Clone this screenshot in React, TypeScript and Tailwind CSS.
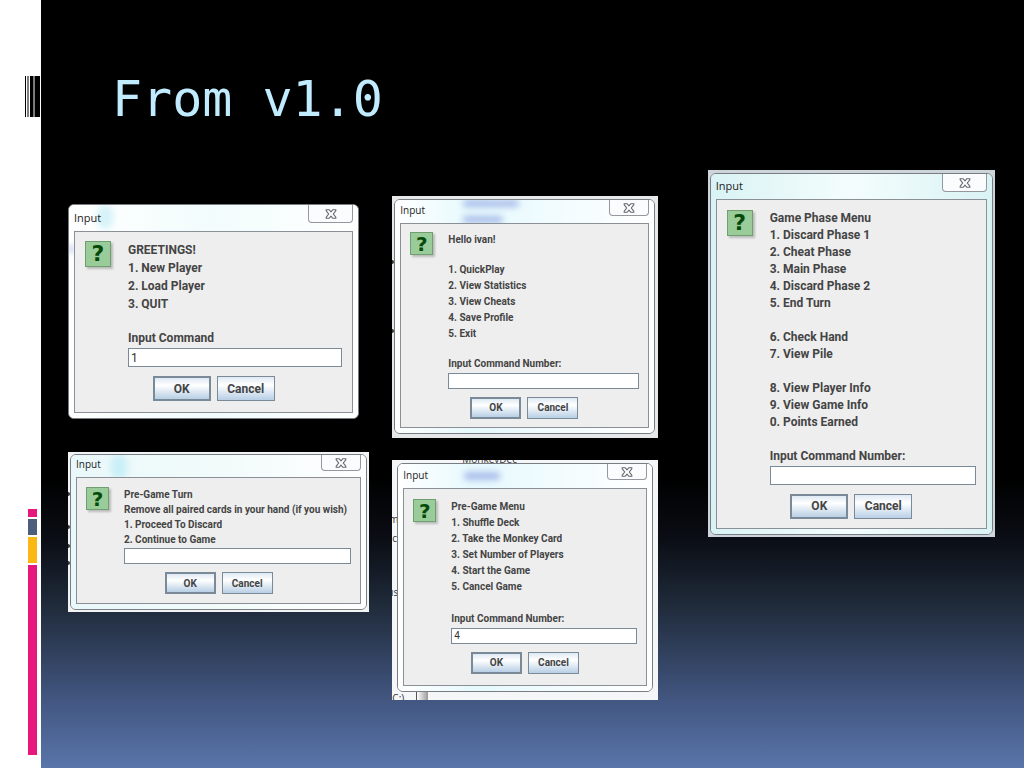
import { useId } from 'react';
import clsx from 'clsx';

type Size = 'lg' | 'sm';

interface DialogProps {
    lines: string[];
    value?: string;
    size?: Size;
    frame: string;
    title: string;
    body: string;
    leading: string;
    blank?: string;
    behind?: React.ReactNode;
    glass?: React.ReactNode;
}

function CloseIcon() {
    return (
        <svg viewBox="0 0 12 10" className="h-[10px] w-3" aria-hidden="true">
            <path
                d="M1.2.7h3L6 2.9 7.8.7h3v1.2L8.3 5l2.5 3.1v1.2h-3L6 7.1 4.2 9.3h-3V8.1L3.7 5 1.2 1.9z"
                fill="#fff"
                stroke="#62676d"
                strokeWidth="1.1"
            />
        </svg>
    );
}

function QuestionIcon({ size }: { size: Size }) {
    return (
        <div
            className={clsx(
                'flex shrink-0 items-center justify-center border border-[#6f9e70] bg-[#99cc99] font-["DejaVu_Sans",sans-serif] leading-none font-bold text-[#064a0a] shadow-[2px_2px_2px_#bbb]',
                size === 'lg' ? 'h-[26px] w-[26px] text-[22px]' : 'h-[23px] w-[23px] text-xl',
            )}
        >
            ?
        </div>
    );
}

function Dialog({ lines, value = '', size = 'sm', frame, title, body, leading, blank, behind, glass }: DialogProps) {
    const id = useId();
    const large = size === 'lg';
    const button = clsx(
        'border-[#7a8a99] bg-linear-to-b from-[#dfe9f3] via-white via-35% to-[#b8cfe5] text-center font-bold',
        large ? 'h-[25px] w-[58px]' : 'h-[22px] w-[51px]',
    );
    const message = lines.slice(0, -1);
    const label = lines[lines.length - 1];

    return (
        <section className={clsx('relative overflow-hidden', frame)}>
            {behind}
            <form
                className="relative overflow-hidden rounded-md border border-[#777d82] bg-white px-[5px] pb-[5px]"
                onSubmit={(e) => e.preventDefault()}
            >
                {glass}
                <header className={clsx('relative flex items-start justify-between', title)}>
                    <h2
                        className={clsx(
                            'self-end pb-[5px] font-["Open_Sans",sans-serif] text-[#1c1c1c]',
                            large ? 'text-[11px]' : 'text-[10px]',
                        )}
                    >
                        Input
                    </h2>
                    <button
                        type="button"
                        aria-label="Close"
                        className={clsx(
                            'flex items-center justify-center rounded-b-sm border border-t-0 border-[#92989e] bg-[#fafcfd]',
                            large ? 'h-[18px] w-[45px]' : 'h-4 w-10',
                        )}
                    >
                        <CloseIcon />
                    </button>
                </header>
                <div
                    className={clsx(
                        'relative border border-[#8b9096] bg-[#eeeeee] font-[Roboto,Arial,sans-serif] font-bold text-[#444]',
                        large ? 'px-[10px] text-xs' : 'px-[9px] text-[10px]',
                        body,
                        leading,
                    )}
                >
                    <div className={clsx('flex items-start', large ? 'gap-[17px]' : 'gap-[15px]')}>
                        <QuestionIcon size={size} />
                        <div className="min-w-0 flex-1 whitespace-nowrap">
                            {message.map((line, i) =>
                                line ? <p key={i}>{line}</p> : <div key={i} className={blank} />,
                            )}
                            <label htmlFor={id} className="block">
                                {label}
                            </label>
                            <input
                                id={id}
                                type="text"
                                defaultValue={value}
                                className={clsx(
                                    'mt-px block w-full border border-[#7a8a99] bg-white px-[2px] font-normal text-[#333] outline-none',
                                    large ? 'h-[19px]' : 'h-4',
                                )}
                            />
                        </div>
                    </div>
                    <div className={clsx('flex justify-center gap-[6px]', large ? 'mt-[9px]' : 'mt-2')}>
                        <button type="submit" className={clsx(button, 'border-2')}>
                            OK
                        </button>
                        <button type="button" className={clsx(button, 'border')}>
                            Cancel
                        </button>
                    </div>
                </div>
            </form>
        </section>
    );
}

function Sidebar() {
    return (
        <aside className="flex w-[41px] shrink-0 flex-col justify-between bg-white pt-[76px] pb-[13px]">
            <svg viewBox="0 0 15 41" className="ml-[25px] h-[41px] w-[15px]" aria-hidden="true">
                <path d="M0 0h1v41H0zM2.5 0h1v41h-1zM5 0h3v41H5zM9.5 0H15v41H9.5z" fill="#000" />
                <path d="M8 0h1v41H8z" fill="#777" />
            </svg>
            <div className="ml-[28px] flex w-[9px] flex-col gap-[2px]">
                <div className="h-2 bg-[#e6187d]" />
                <div className="h-4 bg-[#4b5f7d]" />
                <div className="h-[26px] bg-[#fbb714]" />
                <div className="h-[190px] bg-[#e6187d]" />
            </div>
        </aside>
    );
}

function Smudge({ className }: { className: string }) {
    return <div className={clsx('absolute rounded-full blur-[3px]', className)} />;
}

// edge of a letter from the window under a dialog
function Speck({ className }: { className: string }) {
    return <div className={clsx('absolute left-0 h-1 w-[2px] rounded-r-full bg-[#333]', className)} />;
}

// text of the window that lies under a dialog
function Scrap({ className, children }: { className: string; children: string }) {
    return (
        <span
            aria-hidden="true"
            className={clsx('absolute font-["Open_Sans",sans-serif] text-[10px] leading-[10px] text-[#333]', className)}
        >
            {children}
        </span>
    );
}

export default function App() {
    return (
        <div className="flex min-h-screen">
            <Sidebar />
            <main className="min-w-0 flex-1 bg-[linear-gradient(to_bottom,#000_62%,#0a0d14_70%,#202b3b_79%,#445985_92%,#5975aa_100%)] pr-[29px] pl-[27px]">
                <h1 className='flex h-[170px] items-center pt-7 pl-11 font-["DejaVu_Sans_Mono",monospace] text-[50px] text-[#c1ecff]'>
                    From v1.0
                </h1>
                <div className="grid grid-cols-[minmax(0,301fr)_minmax(0,265fr)_minmax(0,314fr)] items-start gap-[23px]">
                    <div className="flex flex-col gap-[33px] pt-[34px]">
                        <Dialog
                            size="lg"
                            frame="mr-[10px]"
                            title="h-[26px]"
                            body="pt-[9px] pb-[11px]"
                            leading="leading-[18px]"
                            blank="h-4"
                            value="1"
                            lines={['GREETINGS!', '1. New Player', '2. Load Player', '3. QUIT', '', 'Input Command']}
                            glass={
                                <>
                                    <div className="absolute inset-0 bg-linear-to-r from-white via-[#f2fcfc] to-white" />
                                    <Smudge className="top-0 left-7 h-6 w-4 bg-[#d5f3f9]" />
                                    <Smudge className="top-10 left-0 h-2 w-1 bg-[#9db4dc]" />
                                </>
                            }
                        />
                        <Dialog
                            frame="bg-[#f1f3f5] p-[2px]"
                            title="h-[22px]"
                            body="pt-[9px] pb-[9px]"
                            leading="leading-[15px]"
                            lines={[
                                'Pre-Game Turn',
                                'Remove all paired cards in your hand (if you wish)',
                                '1. Proceed To Discard',
                                '2. Continue to Game',
                            ]}
                            behind={
                                <>
                                    <Speck className="top-10" />
                                    <Speck className="top-[73px]" />
                                    <Speck className="top-[92px]" />
                                    <Speck className="top-[109px]" />
                                </>
                            }
                            glass={
                                <>
                                    <div className="absolute inset-0 bg-linear-to-r from-[#e9f8fb] via-[#f2fbfa] to-white" />
                                    <Smudge className="top-0 left-10 h-6 w-4 bg-[#c9eff7]" />
                                </>
                            }
                        />
                    </div>
                    <div className="flex flex-col gap-[22px] pt-[26px]">
                        <Dialog
                            frame="bg-[#e6e8ea] pt-[3px] pr-[3px] pb-1 pl-[2px]"
                            title="h-[23px]"
                            body="pt-2 pb-2"
                            leading="leading-4"
                            blank="h-[14px]"
                            lines={[
                                'Hello ivan!',
                                '',
                                '1. QuickPlay',
                                '2. View Statistics',
                                '3. View Cheats',
                                '4. Save Profile',
                                '5. Exit',
                                '',
                                'Input Command Number:',
                            ]}
                            behind={
                                <>
                                    <Speck className="top-16" />
                                    <Speck className="top-[133px]" />
                                </>
                            }
                            glass={
                                <>
                                    <div className="absolute inset-0 bg-linear-to-r from-white via-[#e6f9fd] via-30% to-white" />
                                    <Smudge className="top-0 left-[68px] h-[7px] w-14 bg-[#a9bdea]" />
                                    <Smudge className="top-4 left-[68px] h-[7px] w-10 bg-[#a9bdea]" />
                                </>
                            }
                        />
                        <Dialog
                            frame="bg-[#f5f6f7] pt-[3px] pr-[5px] pb-2 pl-[5px]"
                            title="h-6"
                            body="pt-[10px] pb-[11px]"
                            leading="leading-4"
                            blank="h-4"
                            value="4"
                            lines={[
                                'Pre-Game Menu',
                                '1. Shuffle Deck',
                                '2. Take the Monkey Card',
                                '3. Set Number of Players',
                                '4. Start the Game',
                                '5. Cancel Game',
                                '',
                                'Input Command Number:',
                            ]}
                            behind={
                                <>
                                    <Scrap className="-top-[6px] left-[70px]">MonkeyDec</Scrap>
                                    <Scrap className="top-[54px] -left-[3px]">m</Scrap>
                                    <Scrap className="top-[73px] left-0">c</Scrap>
                                    <Scrap className="top-[127px] -left-[5px]">us</Scrap>
                                    <Scrap className="-bottom-[3px] left-0">C:)</Scrap>
                                    <div className="absolute bottom-0 left-6 h-2 w-3 border-l border-[#555] bg-linear-to-r from-white to-[#9a9a9a]" />
                                </>
                            }
                            glass={
                                <>
                                    <div className="absolute inset-0 bg-linear-to-r from-white via-[#e6f9fd] via-30% to-white" />
                                    <Smudge className="top-2 left-[66px] h-2 w-9 bg-[#a9bdea]" />
                                </>
                            }
                        />
                    </div>
                    <div className="pl-[27px]">
                        <Dialog
                            size="lg"
                            frame="bg-[#cdd5da] px-[2px] pt-[3px] pb-[2px]"
                            title="h-[25px]"
                            body="pt-[10px] pb-[9px]"
                            leading="leading-[17px]"
                            blank="h-[17px]"
                            lines={[
                                'Game Phase Menu',
                                '1. Discard Phase 1',
                                '2. Cheat Phase',
                                '3. Main Phase',
                                '4. Discard Phase 2',
                                '5. End Turn',
                                '',
                                '6. Check Hand',
                                '7. View Pile',
                                '',
                                '8. View Player Info',
                                '9. View Game Info',
                                '0. Points Earned',
                                '',
                                'Input Command Number:',
                            ]}
                            glass={
                                <div className="absolute inset-0 bg-linear-to-r from-[#d9f3f4] via-[#f4fdfd] to-[#d9f3f4]" />
                            }
                        />
                    </div>
                </div>
            </main>
        </div>
    );
}
